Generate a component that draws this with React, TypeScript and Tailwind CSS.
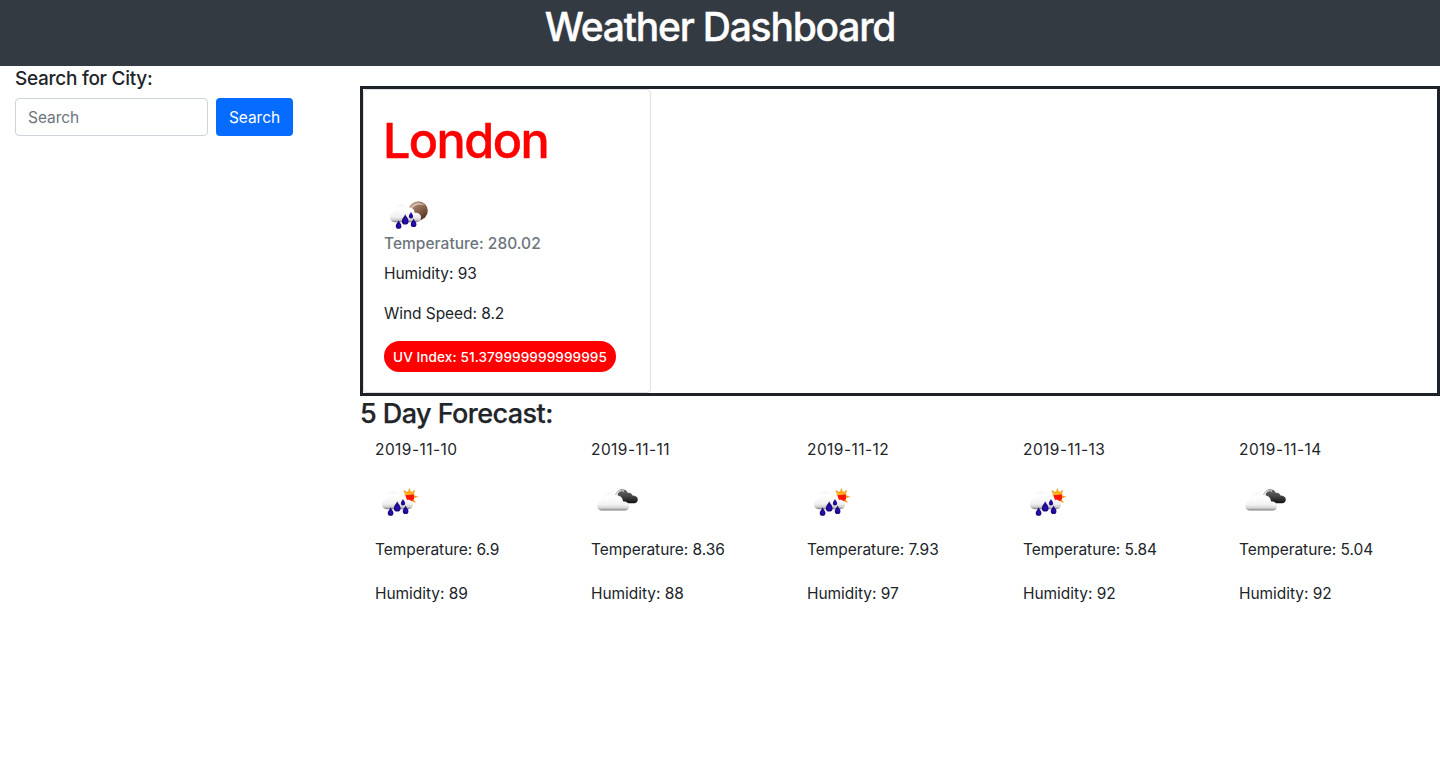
import React from "react";

type Kind = "moon-rain" | "sun-rain" | "clouds";

function Drop({ x, y, s = 1 }: { x: number; y: number; s?: number }) {
  return (
    <g transform={`translate(${x} ${y}) scale(${s})`}>
      <path d="M0 -4.6C0.6 -2.6 3.1 -0.6 3.1 1.6A3.1 3.1 0 0 1 -3.1 1.6C-3.1 -0.6 -0.6 -2.6 0 -4.6Z" fill="#1c0a86" />
      <path d="M0.4 -1.6C1.6 0 1.8 1.4 0.9 2.5C0 3.1 -1 2.7 -1 1.6C-0.9 0.4 0 -0.4 0.4 -1.6Z" fill="#3408c0" />
    </g>
  );
}

function WeatherIcon({ kind, id }: { kind: Kind; id: string }) {
  const cloud = `${id}-cloud`;
  const moon = `${id}-moon`;
  const dark = `${id}-dark`;
  return (
    <svg width="50" height="50" viewBox="0 0 50 50" className="block">
      <defs>
        <linearGradient id={cloud} x1="0" y1="0" x2="0" y2="1">
          <stop offset="0" stopColor="#f4f4f4" />
          <stop offset="0.25" stopColor="#ffffff" />
          <stop offset="0.7" stopColor="#f1f1f1" />
          <stop offset="0.88" stopColor="#cfcfcf" />
          <stop offset="1" stopColor="#7c7c7c" />
        </linearGradient>
        <linearGradient id={moon} x1="0" y1="0" x2="0.6" y2="1">
          <stop offset="0" stopColor="#d8b8a4" />
          <stop offset="0.35" stopColor="#a07c66" />
          <stop offset="1" stopColor="#5a3420" />
        </linearGradient>
        <linearGradient id={dark} x1="0" y1="0" x2="0" y2="1">
          <stop offset="0" stopColor="#6a6a6a" />
          <stop offset="0.5" stopColor="#454545" />
          <stop offset="1" stopColor="#111111" />
        </linearGradient>
      </defs>
      {kind === "clouds" ? (
        <>
          <path d="M26.5 20C27 16.5 29.2 14.6 32 14.6C34.2 14.6 35.8 15.7 36.6 17.8C39 17.2 41 18.4 41.4 20.6C43.8 20.6 46.8 21.6 46.8 24.6C46.8 27 45.2 28.2 43 28.2H36C33 28 28 24 26.5 20Z" fill={`url(#${dark})`} />
          <path d="M25.2 20.6C26.8 16.4 29.2 14.9 33 16.2" fill="none" stroke="#f4f4f4" strokeWidth="1" />
          <path d="M24.6 19.8C25.8 16.4 28.6 14 32 14.4" fill="none" stroke="#777" strokeWidth="0.7" />
          <path d="M10 35.4C7.5 35 6.2 33.3 6.2 31C6.2 28.2 7.8 26.2 10.6 26C10.2 20.6 13.6 17.4 17.6 17.4C20.6 17.4 22.8 18.7 24 21C27.6 19.6 31.8 21.8 32 26.6C35.6 26.4 38 28.4 38 31.4C38 33.8 36.4 35.4 34 35.4Z" fill={`url(#${cloud})`} />
        </>
      ) : (
        <>
          {kind === "moon-rain" ? (
            <>
              <circle cx="35.2" cy="22.8" r="9.6" fill={`url(#${moon})`} />
              <path d="M27 21C29 15 37 13 41.5 17.4C36 15.8 31 17 28.4 21.6Z" fill="#ead7cb" opacity="0.65" />
            </>
          ) : (
            <>
              <path
                d="M34.4 12.8L35.7 16.8H33.1ZM40 14.8L39.2 18.8L37 16.9ZM43.4 21.8L39.4 23V20.4ZM40.8 28L36.9 26.2L39 24.2ZM28.4 14.8L32 17L29.8 18.9Z"
                fill="#f59a1c"
              />
              <circle cx="34.6" cy="21.4" r="5.1" fill="#ff9d10" />
              <circle cx="34.9" cy="22.2" r="4.2" fill="#fc1208" />
              <path d="M30 20C31.4 16.8 36 16.4 38.2 19.2L34.5 20Z" fill="#ffb414" />
            </>
          )}
          <path d="M11.4 34.2C8.6 33.9 6.9 31.8 6.9 29C6.9 26.2 8.6 24.2 11.2 24C10.6 19.2 13.8 16 18 16C21.2 16 23.3 17.2 24.4 19.8C27.6 18.8 31.4 20.6 31.8 24.9C35.2 24.5 38 26.4 38 29.6C38 32.3 36.4 34.2 33.5 34.2Z" fill={`url(#${cloud})`} />
          <Drop x={15.6} y={36.5} s={0.92} />
          <Drop x={22.2} y={31.4} s={1.1} />
          <Drop x={28} y={27.2} s={0.7} />
          <Drop x={30.6} y={34.8} s={0.92} />
        </>
      )}
    </svg>
  );
}

interface Day {
  date: string;
  kind: Kind;
  temp: string;
  humidity: number;
}

const days: Day[] = [
  { date: "2019-11-10", kind: "sun-rain", temp: "6.9", humidity: 89 },
  { date: "2019-11-11", kind: "clouds", temp: "8.36", humidity: 88 },
  { date: "2019-11-12", kind: "sun-rain", temp: "7.93", humidity: 97 },
  { date: "2019-11-13", kind: "sun-rain", temp: "5.84", humidity: 92 },
  { date: "2019-11-14", kind: "clouds", temp: "5.04", humidity: 92 },
];

export default function App() {
  return (
    <div className="h-[783px] overflow-hidden bg-white font-['Inter',sans-serif] text-[15.5px] leading-6 tracking-[-0.05px] text-[#212529]">
      <header className="h-[66px] bg-[#343a42] pt-[3px] text-center">
        <h1 className="text-[39px] font-medium leading-[48px] tracking-[-1.22px] text-white [-webkit-text-stroke:0.4px_white]">
          Weather Dashboard
        </h1>
      </header>
      <main className="flex">
        <aside className="w-[360px] shrink-0 px-[15px]">
          <h5 className="pt-px text-[19px] font-medium leading-6 tracking-[-0.27px]">Search for City:</h5>
          <form className="mt-[7px] flex gap-2" onSubmit={(e) => e.preventDefault()}>
            <input
              type="search"
              placeholder="Search"
              className="h-[38px] w-[193px] rounded border border-[#ced4da] bg-white px-3 placeholder:text-[#6c757d]"
            />
            <button type="submit" className="h-[38px] w-[77px] rounded bg-[#066bff] pt-0.5 text-white">
              Search
            </button>
          </form>
        </aside>
        <section className="min-w-0 grow pt-5">
          <div className="h-[310px] border-[3px] border-[#1d2228]">
            <article className="h-[304px] w-72 rounded border border-[#dfdfdf] p-5">
              <h2 className="-ml-px pt-px text-[48.5px] font-medium leading-[60px] tracking-[-1.55px] text-[#ff0000] [-webkit-text-stroke:0.5px_#ff0000]">
                London
              </h2>
              <div className="-ml-px mt-[17px] h-11">
                <WeatherIcon kind="moon-rain" id="today" />
              </div>
              <h6 className="font-medium tracking-[0.03px] text-[#6c757d]">Temperature: 280.02</h6>
              <p className="mt-1.5">Humidity: 93</p>
              <p className="mt-4">Wind Speed: 8.2</p>
              <button className="mt-[15px] block h-[31px] w-[232px] rounded-full bg-[#ff0000] text-[13.6px] font-medium tracking-[0.08px] text-white">
                UV Index: 51.379999999999995
              </button>
            </article>
          </div>
          <h3 className="pt-px text-[27px] font-medium leading-[34px] tracking-[-0.55px] [-webkit-text-stroke:0.25px_#212529]">
            5 Day Forecast:
          </h3>
          <div className="mt-[7px] grid grid-cols-5">
            {days.map((d) => (
              <div key={d.date} className="pl-[15px]">
                <p className="tracking-[0.44px]">{d.date}</p>
                <div className="mt-[13px]">
                  <WeatherIcon kind={d.kind} id={d.date} />
                </div>
                <p className="mt-[13px]">Temperature: {d.temp}</p>
                <p className="mt-5">Humidity: {d.humidity}</p>
              </div>
            ))}
          </div>
        </section>
      </main>
    </div>
  );
}
